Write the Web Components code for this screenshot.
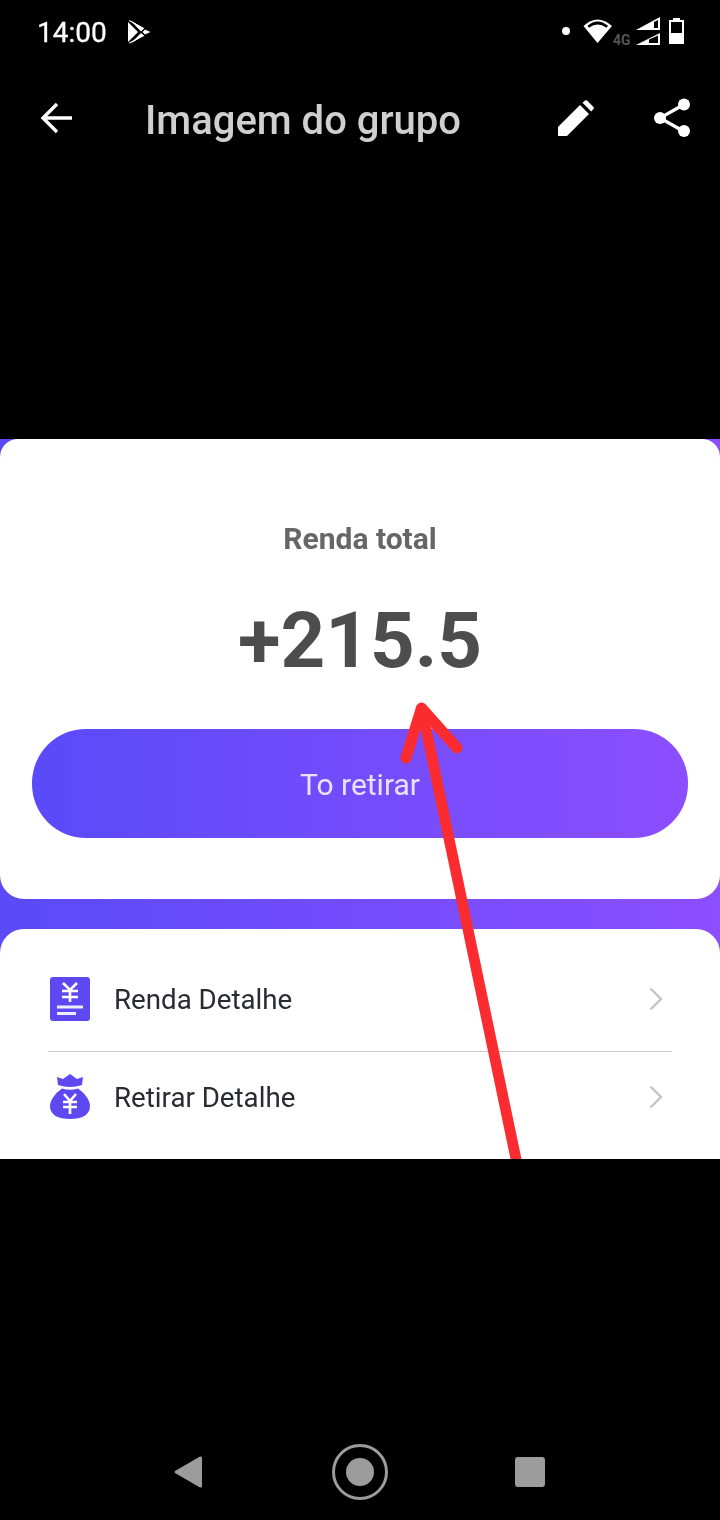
<!DOCTYPE html>
<html lang="pt">
<head>
<meta charset="utf-8">
<title>Imagem do grupo</title>
<style>
  html, body { margin: 0; background: #000; }
  body { width: 720px; height: 1520px; display: flex; flex-direction: column; font-family: Roboto, "Liberation Sans", sans-serif; overflow: hidden; }
</style>
</head>
<body>
<status-bar time="14:00"></status-bar>
<app-toolbar>Imagem do grupo</app-toolbar>
<income-shot>
  <info-row slot="rows" icon="list" divider>Renda Detalhe</info-row>
  <info-row slot="rows" icon="bag">Retirar Detalhe</info-row>
</income-shot>
<nav-bar></nav-bar>

<script>
class StatusBar extends HTMLElement {
  constructor() {
    super();
    this.attachShadow({ mode: 'open' }).innerHTML = `
      <style>
        :host { display: flex; align-items: flex-start; height: 64px; flex: none; color: #fff; position: relative; will-change: opacity; }
        .time { margin: 15px 0 0 37px; font-size: 28px; line-height: 36px; font-weight: 400; -webkit-text-stroke: .3px #fff; }
        .play { margin: 19px 0 0 21px; }
        svg { display: block; }
        .icons { position: absolute; left: 0; top: 17px; }
        .net { font: 700 14px/14px Roboto, sans-serif; color: #555; position: absolute; left: 613px; top: 33px; }
      </style>
      <span class="time"></span>
      <svg class="play" width="23" height="25" viewBox="0 0 23 25">
        <path d="M0 3 L0 23 L10 13 Z M2 1 L13 12.500 L16 9.500 Z M2 25 L13 14 L16 16.500 Z M14.500 13 L17 10.500 L22.500 13 L17 15.500 Z" fill="#fff"/>
        <path d="M1 1.500 L16 9.500 M1 24 L16 16.500" stroke="#fff" stroke-width="1" fill="none"/>
      </svg>
      <svg class="icons" width="720" height="30" viewBox="0 17 720 30">
        <circle cx="566" cy="31" r="4" fill="#fff"/>
        <path d="M583.500 26 Q597.500 13 612 26 L597.500 43 Z" fill="#fff"/>
        <path d="M587.500 25.800 Q597.500 17 608 25.800 L606.500 27.800 Q597.500 21 589 27.800 Z" fill="#000"/>
        <path d="M636 30 L660 17 L660 30 Z" fill="#fff"/>
        <path d="M654 22 L658 20 L658 28 L654 28 Z" fill="#000"/>
        <path d="M636 45 L660 33 L660 45 Z" fill="#fff"/>
        <path d="M649 39.500 L658 35.500 L658 43 L649 43 Z" fill="#000"/>
        <path d="M673 18 H680 V20 H684 V44 H669 V20 H673 Z" fill="#fff"/>
        <rect x="671" y="22" width="11" height="11" fill="#000"/>
      </svg>
      <span class="net">4G</span>`;
  }
  connectedCallback() {
    this.shadowRoot.querySelector('.time').textContent = this.getAttribute('time');
  }
}

class AppToolbar extends HTMLElement {
  constructor() {
    super();
    this.attachShadow({ mode: 'open' }).innerHTML = `
      <style>
        :host { display: flex; align-items: center; height: 112px; flex: none; will-change: opacity; }
        .back { margin: 0 0 5px 40px; }
        .title { margin-left: 72px; font-size: 40px; font-weight: 500; color: #cfcfcf; white-space: nowrap; }
        .edit { margin: 0 0 4px auto; }
        .share { margin: 0 30px 4px 60px; }
        svg { display: block; flex: none; }
      </style>
      <svg class="back" width="33" height="32" viewBox="0 0 33 32">
        <path d="M32 16 H3 M17 2 L3 16 L17 30" fill="none" stroke="#fff" stroke-width="3.400"/>
      </svg>
      <span class="title"><slot></slot></span>
      <svg class="edit" width="36" height="36" viewBox="0 0 36 36">
        <path d="M0 27 L22 5 L31 14 L9 36 L0 36 Z M24.500 2.700 L27 .5 Q28 -.2 29 .5 L35.500 7 Q36.200 8 35.500 9 L33.300 11.500 Z" fill="#fff"/>
      </svg>
      <svg class="share" width="36" height="40" viewBox="0 0 36 40">
        <path d="M29 7 L6 20 L29 33" fill="none" stroke="#fff" stroke-width="3.200"/>
        <circle cx="30" cy="6.500" r="6" fill="#fff"/>
        <circle cx="6" cy="20" r="6" fill="#fff"/>
        <circle cx="30" cy="33" r="6" fill="#fff"/>
      </svg>`;
  }
}

class IncomeShot extends HTMLElement {
  constructor() {
    super();
    this.attachShadow({ mode: 'open' }).innerHTML = `
      <style>
        :host {
          display: block; position: relative; overflow: hidden;
          height: 720px; flex: none; margin-top: 263px;
          background: #000;
        }
        /* the screenshot inside the screenshot is soft, so blur it a little */
        .photo {
          display: flex; flex-direction: column; gap: 30px; height: 100%;
          background: linear-gradient(90deg, #5a4af8, #8c4eff);
          filter: blur(.5px);
        }
        .card { background: #fff; }
        .total {
          height: 460px; flex: none; box-sizing: border-box; border-radius: 18px 18px 24px 24px;
          display: flex; flex-direction: column; align-items: center; padding: 0 32px;
        }
        .label { margin-top: 82px; font-size: 30px; line-height: 36px; font-weight: 700; color: #666; }
        .amount { margin-top: 37px; font-size: 78px; line-height: 94px; font-weight: 700; color: #4d4d4d; }
        .btn {
          margin-top: 41px; width: 100%; height: 109px; box-sizing: border-box; padding-top: 2px; flex: none; border-radius: 54px;
          background: linear-gradient(90deg, #5a4af8, #8c4eff);
          display: flex; align-items: center; justify-content: center;
          font-size: 30px; color: #e9e2ff;
        }
        .list { flex: 1; border-radius: 24px 24px 0 0; padding: 25px 48px 0; }
        .arrow { position: absolute; left: 0; top: 0; }
      </style>
      <div class="photo">
        <div class="card total">
          <div class="label">Renda total</div>
          <div class="amount">+215.5</div>
          <div class="btn">To retirar</div>
        </div>
        <div class="card list"><slot name="rows"></slot></div>
      </div>
      <svg class="arrow" width="720" height="720" viewBox="0 439 720 720">
        <path d="M417 712 L428 712 L521.500 1159 L510.500 1159 Z" fill="#fb2c30"/>
        <path d="M406 758 L421.500 708 L457 748" fill="none" stroke="#fb2c30" stroke-width="11" stroke-linecap="round" stroke-linejoin="round"/>
      </svg>`;
  }
}

const ROW_ICONS = {
  list: `<svg width="40" height="44" viewBox="0 0 40 44">
      <rect width="40" height="44" rx="3" fill="#5d48f2"/>
      <path d="M13 6 L20 13 L27 6 M12 14 H28 M12 20 H28 M20 13 V25" fill="none" stroke="#fff" stroke-width="2.600"/>
      <path d="M7 30 H33 M7 36.500 H26" fill="none" stroke="#f0edff" stroke-width="2.800"/>
    </svg>`,
  bag: `<svg width="40" height="46" viewBox="0 0 40 46">
      <path d="M7 3 L13 5 L20 0 L27 5 L33 3 L32 11 Q20 15 8 11 Z" fill="#5d48f2"/>
      <path d="M12 14.500 Q20 17 28 14.500 C36 20 40 27 40 32 C40 41 32 45 20 45 C8 45 0 41 0 32 C0 27 4 20 12 14.500 Z" fill="#5d48f2"/>
      <path d="M14 20 L20 27 L26 20 M13 28 H27 M13 33 H27 M20 27 V40" fill="none" stroke="#fff" stroke-width="2.600"/>
    </svg>`
};

class InfoRow extends HTMLElement {
  constructor() {
    super();
    this.attachShadow({ mode: 'open' }).innerHTML = `
      <style>
        :host { display: flex; align-items: center; height: 90px; font-size: 27.700px; color: #2a2a33; }
        :host([divider]) { padding-bottom: 7px; border-bottom: 1px solid #c9c9c9; }
        .icon { width: 40px; margin: 0 24px 0 2px; flex: none; display: flex; }
        .chev { margin: 0 9px 0 auto; display: block; }
      </style>
      <span class="icon"></span>
      <slot></slot>
      <svg class="chev" width="14" height="24" viewBox="0 0 14 24">
        <path d="M1.500 1.500 L12 12 L1.500 22.500" fill="none" stroke="#c4c4c4" stroke-width="2.400"/>
      </svg>`;
  }
  connectedCallback() {
    this.shadowRoot.querySelector('.icon').innerHTML = ROW_ICONS[this.getAttribute('icon')] || '';
  }
}

class NavBar extends HTMLElement {
  constructor() {
    super();
    this.attachShadow({ mode: 'open' }).innerHTML = `
      <style>
        :host { display: flex; align-items: center; height: 100px; margin-top: 263px; padding-left: 174px; flex: none; }
        svg { display: block; flex: none; }
        .tri { margin-right: 130px; }
        .sq { margin-left: 127px; }
      </style>
      <svg class="tri" width="28" height="32" viewBox="0 0 28 32">
        <path d="M1 15 L26 .5 Q28 0 28 2 V30 Q28 32 26 31.500 L1 17 Q0 16 1 15 Z" fill="#9c9c9c"/>
      </svg>
      <svg width="56" height="56" viewBox="0 0 56 56">
        <circle cx="28" cy="28" r="26.500" fill="none" stroke="#9c9c9c" stroke-width="3"/>
        <circle cx="28" cy="28" r="14" fill="#9c9c9c"/>
      </svg>
      <svg class="sq" width="30" height="30" viewBox="0 0 30 30">
        <rect width="30" height="30" rx="3" fill="#9c9c9c"/>
      </svg>`;
  }
}

customElements.define('status-bar', StatusBar);
customElements.define('app-toolbar', AppToolbar);
customElements.define('income-shot', IncomeShot);
customElements.define('info-row', InfoRow);
customElements.define('nav-bar', NavBar);
</script>
</body>
</html>
